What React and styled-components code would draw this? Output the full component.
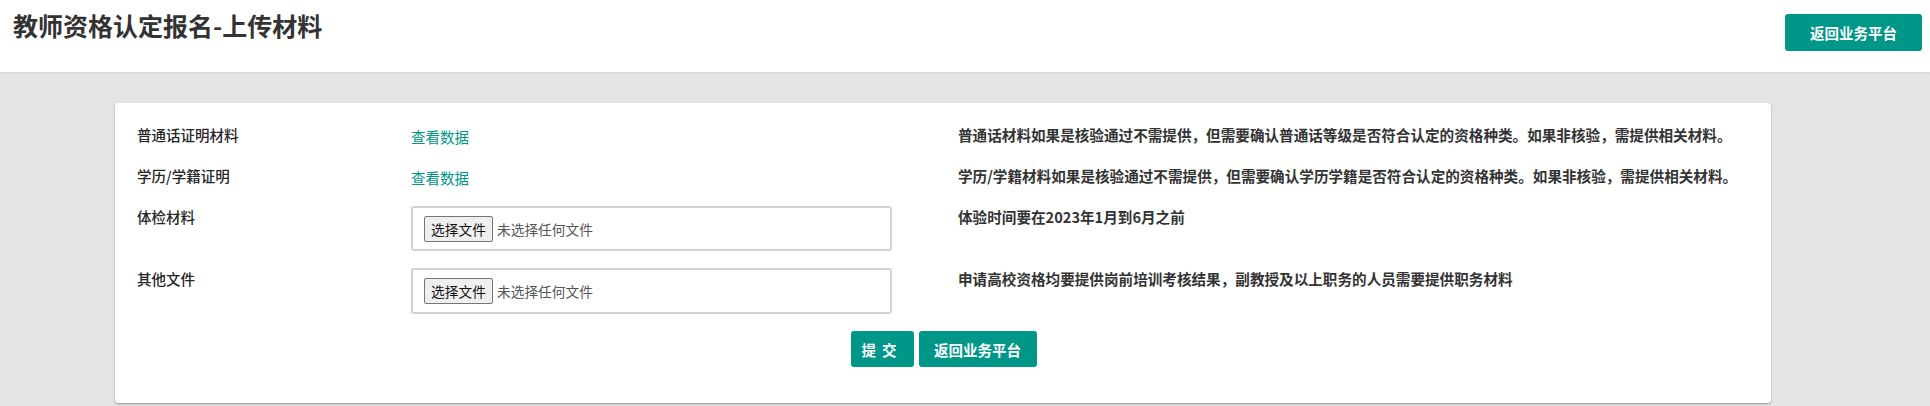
import React from "react";
import styled, { createGlobalStyle } from "styled-components";

const Global = createGlobalStyle`
  html, body { margin: 0; padding: 0; background: #e4e4e4; }
  body { font-family: "Noto Sans CJK SC", "Noto Sans", sans-serif; color: #333; }
  * { box-sizing: border-box; }
`;

const Page = styled.div`
  width: 1930px;
  min-height: 406px;
  background: #e4e4e4;
`;

const Header = styled.header`
  height: 72px;
  background: #fff;
  box-shadow: 0 1px 2px rgba(0, 0, 0, 0.08);
  display: flex;
  align-items: flex-start;
  justify-content: space-between;
  padding: 0 8px 0 13px;
`;

const Title = styled.h1`
  margin: 0;
  padding-top: 7px;
  font-size: 25px;
  line-height: 36px;
  font-weight: 700;
  color: #333;
`;

const Button = styled.button`
  height: ${(p) => (p.$tall ? "37px" : "36px")};
  width: ${(p) => p.$w}px;
  margin-top: ${(p) => p.$mt || 0}px;
  border: none;
  border-radius: 3px;
  background: #009688;
  color: #fff;
  font-family: "Noto Sans CJK SC", sans-serif;
  font-size: 14.5px;
  font-weight: 700;
  letter-spacing: ${(p) => p.$ls || 0}px;
  cursor: pointer;
  padding: 0;
`;

const Main = styled.main`
  padding: 31px 159px 0 115px;
`;

const Card = styled.section`
  background: #fff;
  border-radius: 3px;
  box-shadow: 0 1px 2px rgba(0, 0, 0, 0.35);
  padding: 21px 22px 36px 22px;
  display: flex;
  flex-direction: column;
  gap: 17px;
`;

const Row = styled.div`
  display: grid;
  grid-template-columns: 274px 547px 1fr;
  align-items: start;
  min-height: ${(p) => (p.$file ? "45px" : "24px")};
`;

const Label = styled.div`
  font-size: 14.5px;
  line-height: 22px;
  font-weight: 500;
  color: #262626;
`;

const Link = styled.a`
  font-size: 14.5px;
  line-height: 22px;
  color: #009688;
  text-decoration: none;
  cursor: pointer;
`;

const Note = styled.div`
  font-size: 14.6px;
  line-height: 22px;
  font-weight: 700;
  color: #333;
  white-space: nowrap;
`;

const FileBox = styled.div`
  width: 481px;
  height: ${(p) => p.$h}px;
  border: 2px solid #d2d2d2;
  border-radius: 3px;
  display: flex;
  align-items: center;
  padding-left: 11px;
  gap: 4px;
`;

const FileButton = styled.span`
  height: 26px;
  width: 69px;
  display: inline-flex;
  align-items: center;
  justify-content: center;
  border: 1px solid #767676;
  border-radius: 2px;
  background: #efefef;
  font-size: 13.7px;
  color: #111;
`;

const FileText = styled.span`
  font-size: 13.7px;
  color: #555;
`;

const Actions = styled.div`
  display: flex;
  justify-content: center;
  gap: 5px;
  padding-left: 1px;
`;

function FileInput({ h }) {
  return (
    <FileBox $h={h}>
      <FileButton>选择文件</FileButton>
      <FileText>未选择任何文件</FileText>
    </FileBox>
  );
}

export default function App() {
  return (
    <Page>
      <Global />
      <Header>
        <Title>教师资格认定报名-上传材料</Title>
        <Button $tall $w={137} $mt={14}>返回业务平台</Button>
      </Header>
      <Main>
        <Card>
          <Row>
            <Label>普通话证明材料</Label>
            <div><Link>查看数据</Link></div>
            <Note>普通话材料如果是核验通过不需提供，但需要确认普通话等级是否符合认定的资格种类。如果非核验，需提供相关材料。</Note>
          </Row>
          <Row>
            <Label>学历/学籍证明</Label>
            <div><Link>查看数据</Link></div>
            <Note>学历/学籍材料如果是核验通过不需提供，但需要确认学历学籍是否符合认定的资格种类。如果非核验，需提供相关材料。</Note>
          </Row>
          <Row $file>
            <Label>体检材料</Label>
            <FileInput h={45} />
            <Note>体验时间要在2023年1月到6月之前</Note>
          </Row>
          <Row $file>
            <Label>其他文件</Label>
            <FileInput h={46} />
            <Note>申请高校资格均要提供岗前培训考核结果，副教授及以上职务的人员需要提供职务材料</Note>
          </Row>
          <Actions>
            <Button $w={63} $ls={6}>提交</Button>
            <Button $w={118}>返回业务平台</Button>
          </Actions>
        </Card>
      </Main>
    </Page>
  );
}
